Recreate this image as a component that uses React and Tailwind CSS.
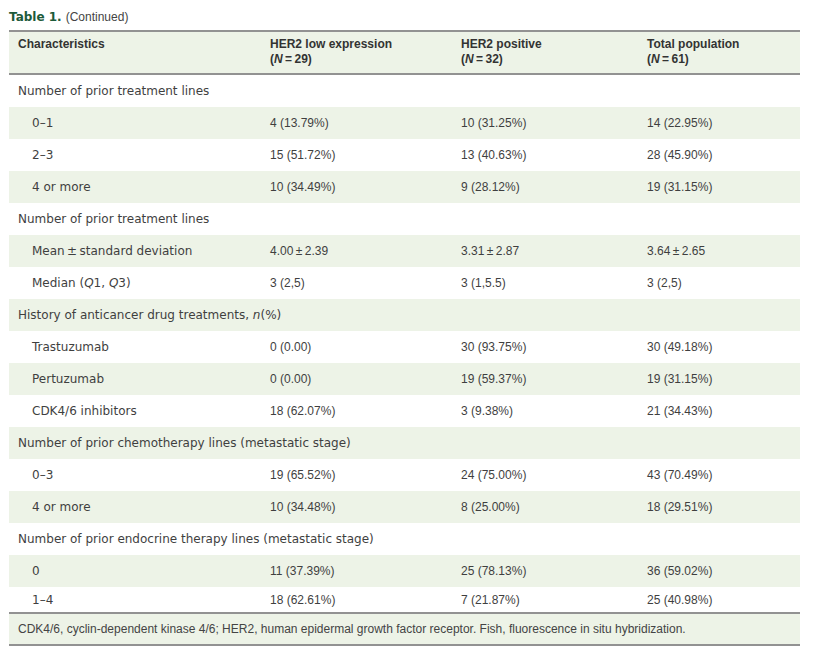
import React from 'react';

const rows = [
  { label: 'Number of prior treatment lines' },
  { label: '0–1', sub: true, vals: ['4 (13.79%)', '10 (31.25%)', '14 (22.95%)'] },
  { label: '2–3', sub: true, vals: ['15 (51.72%)', '13 (40.63%)', '28 (45.90%)'] },
  { label: '4 or more', sub: true, vals: ['10 (34.49%)', '9 (28.12%)', '19 (31.15%)'] },
  { label: 'Number of prior treatment lines' },
  { label: 'Mean\u2009±\u2009standard deviation', sub: true, vals: ['4.00\u2009±\u20092.39', '3.31\u2009±\u20092.87', '3.64\u2009±\u20092.65'] },
  {
    label: (
      <>
        Median (<i>Q</i>1, <i>Q</i>3)
      </>
    ),
    sub: true,
    vals: ['3 (2,5)', '3 (1,5.5)', '3 (2,5)'],
  },
  {
    label: (
      <>
        History of anticancer drug treatments, <i>n</i>(%)
      </>
    ),
  },
  { label: 'Trastuzumab', sub: true, vals: ['0 (0.00)', '30 (93.75%)', '30 (49.18%)'] },
  { label: 'Pertuzumab', sub: true, vals: ['0 (0.00)', '19 (59.37%)', '19 (31.15%)'] },
  { label: 'CDK4/6 inhibitors', sub: true, vals: ['18 (62.07%)', '3 (9.38%)', '21 (34.43%)'] },
  { label: 'Number of prior chemotherapy lines (metastatic stage)' },
  { label: '0–3', sub: true, vals: ['19 (65.52%)', '24 (75.00%)', '43 (70.49%)'] },
  { label: '4 or more', sub: true, vals: ['10 (34.48%)', '8 (25.00%)', '18 (29.51%)'] },
  { label: 'Number of prior endocrine therapy lines (metastatic stage)' },
  { label: '0', sub: true, vals: ['11 (37.39%)', '25 (78.13%)', '36 (59.02%)'] },
  { label: '1–4', sub: true, vals: ['18 (62.61%)', '7 (21.87%)', '25 (40.98%)'] },
];

const grid = 'grid grid-cols-[252px_191px_186px_1fr]';

function HeadCell({ title, n }) {
  return (
    <div className="pl-[9px]">
      <div>{title}</div>
      {n && (
        <div>
          (<i>N</i>
          {'\u2009=\u2009'}
          {n})
        </div>
      )}
    </div>
  );
}

export default function App() {
  return (
    <div className="min-h-[660px] w-[821px] bg-white font-['Liberation_Sans',sans-serif] text-[12px] text-[#3f3f3f]">
      <div className="h-[30px] pl-[9px] pt-[10px] leading-[14px]">
        <span className="font-['DejaVu_Sans',sans-serif] font-bold text-[#1d5a3a]">Table 1.</span>
        <span className="ml-[4px] text-[#444]">(Continued)</span>
      </div>

      <div className="ml-[9px] w-[791px]">
        <div className={`${grid} h-[45px] border-y-2 border-[#929292] bg-[#edf3e7] pt-[5px] font-bold leading-[15px] text-[#333]`}>
          <HeadCell title="Characteristics" />
          <HeadCell title="HER2 low expression" n="29" />
          <HeadCell title="HER2 positive" n="32" />
          <HeadCell title="Total population" n="61" />
        </div>

        {rows.map((r, i) => (
          <div
            key={i}
            className={`${grid} items-center ${i === rows.length - 1 ? 'h-[25px]' : 'h-8'} ${i % 2 === 1 ? 'bg-[#edf3e7]' : 'bg-white'}`}
          >
            <div
              className={`${r.sub ? 'pl-[23px]' : 'pl-[9px]'} whitespace-nowrap font-['DejaVu_Sans',sans-serif] ${r.vals ? '' : 'col-span-4'}`}
            >
              {r.label}
            </div>
            {r.vals &&
              r.vals.map((v, j) => (
                <div key={j} className="pl-[9px] whitespace-nowrap">
                  {v}
                </div>
              ))}
          </div>
        ))}

        <div className="flex h-[34px] items-center border-y-2 border-[#929292] bg-[#edf3e7] pl-[9px] text-[12px] text-[#444]">
          CDK4/6, cyclin-dependent kinase 4/6; HER2, human epidermal growth factor receptor. Fish, fluorescence in situ hybridization.
        </div>
      </div>
    </div>
  );
}
